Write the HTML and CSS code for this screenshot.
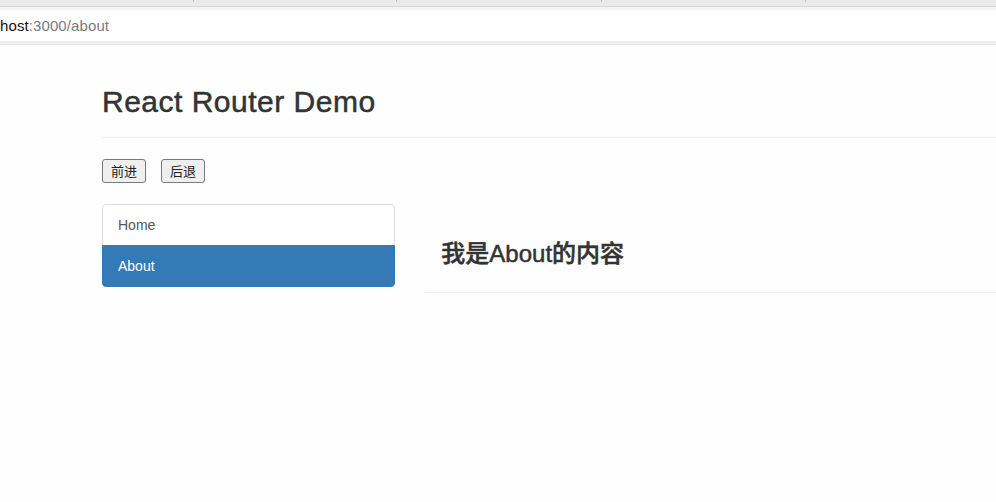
FILE: index.html
```html
<!DOCTYPE html>
<html lang="zh-CN">
<head>
<meta charset="utf-8">
<title>React Router Demo</title>
<link rel="stylesheet" href="styles.css">
</head>
<body>
<div class="chrome">
  <div class="tabs">
    <span class="tab"></span><span class="tab tab-2"></span><span class="tab tab-3"></span><span class="tab tab-4"></span>
  </div>
  <div class="toolbar">
    <div class="addr"><span class="host">host</span><span class="rest">:3000/about</span></div>
  </div>
</div>
<div class="page">
  <div class="container">
    <div class="page-header"><h2>React Router Demo</h2></div>
    <div class="nav-btns">
      <button class="btn" type="button">前进</button>
      <button class="btn" type="button">后退</button>
    </div>
    <div class="row">
      <div class="col-side">
        <div class="list-group">
          <a class="list-item">Home</a>
          <a class="list-item active">About</a>
        </div>
      </div>
      <div class="col-main">
        <div class="content-header"><h3>我是About的内容</h3></div>
      </div>
    </div>
  </div>
</div>
</body>
</html>
```

FILE: styles.css
```css
* { box-sizing: border-box; }
html, body { margin: 0; padding: 0; }
body {
  width: 996px;
  height: 502px;
  overflow: hidden;
  background: #fefefe;
  font-family: "Liberation Sans", "Noto Sans CJK SC", sans-serif;
  color: #333;
}
.chrome {
  background: #f3f3f3;
}
.tabs {
  height: 7px;
  background: #eaeaea;
  border-bottom: 1px solid #d8d8d8;
  display: flex;
  align-items: flex-start;
}
.tab {
  width: 203px;
  height: 2px;
  border-right: 1px solid #c4c4c4;
}
.tab:first-child { width: 194px; }
.tab-3 { width: 205px; }
.tab-4 { width: 204px; }
.toolbar {
  padding: 3px 0 0;
  border-bottom: 1px solid #e6e6e6;
}
.addr {
  height: 34px;
  background: #ffffff;
  font-size: 15px;
  line-height: 32px;
  padding-left: 0;
  border-bottom: 3px solid #eeeeee;
  letter-spacing: 0.1px;
}
.host { color: #111; }
.rest { color: #7a7a7a; }

.container {
  width: 970px;
  margin-left: 87px;
  padding: 0 15px;
}
.page-header {
  margin: 40px 0 20px;
  padding-bottom: 9px;
  border-bottom: 1px solid #eeeeee;
}
.page-header h2 {
  margin: 0 0 10px;
  font-size: 30px;
  font-weight: 400;
  line-height: 1.1;
  letter-spacing: 0.5px;
  color: #333;
  -webkit-text-stroke: 0.5px #333;
}
.nav-btns {
  display: flex;
  gap: 15px;
  margin-top: 21px;
}
.btn {
  font-family: "Noto Sans CJK SC", sans-serif;
  font-size: 13px;
  line-height: 18px;
  height: 24px;
  padding: 0 8px;
  color: #222;
  background: #efefef;
  border: 1px solid #7a7a7a;
  border-radius: 3px;
}
.row {
  display: flex;
  margin: 21px -15px 0;
}
.col-side {
  width: 323.33px;
  padding: 0 15px;
  flex: none;
}
.col-main {
  flex: 1;
  padding: 0 15px;
}
.list-group {
  display: flex;
  flex-direction: column;
}
.list-item {
  display: block;
  padding: 10px 15px;
  font-size: 14px;
  line-height: 20px;
  color: #555;
  background: #fff;
  border: 1px solid #ddd;
  text-decoration: none;
}
.list-item:first-child {
  border-radius: 4px 4px 0 0;
}
.list-item:last-child {
  border-radius: 0 0 4px 4px;
  margin-top: -1px;
}
.list-item.active {
  color: #fff;
  background: #337ab7;
  border-color: #337ab7;
}
.content-header {
  margin-top: 37px;
  padding: 0 16px 25px;
  border-bottom: 1px solid #eeeeee;
}
.content-header h3 {
  margin: 0;
  font-family: "Liberation Sans", "Noto Sans CJK SC", sans-serif;
  font-size: 24px;
  font-weight: 500;
  line-height: 26px;
  color: #333;
  -webkit-text-stroke: 0.5px #333;
}
```
